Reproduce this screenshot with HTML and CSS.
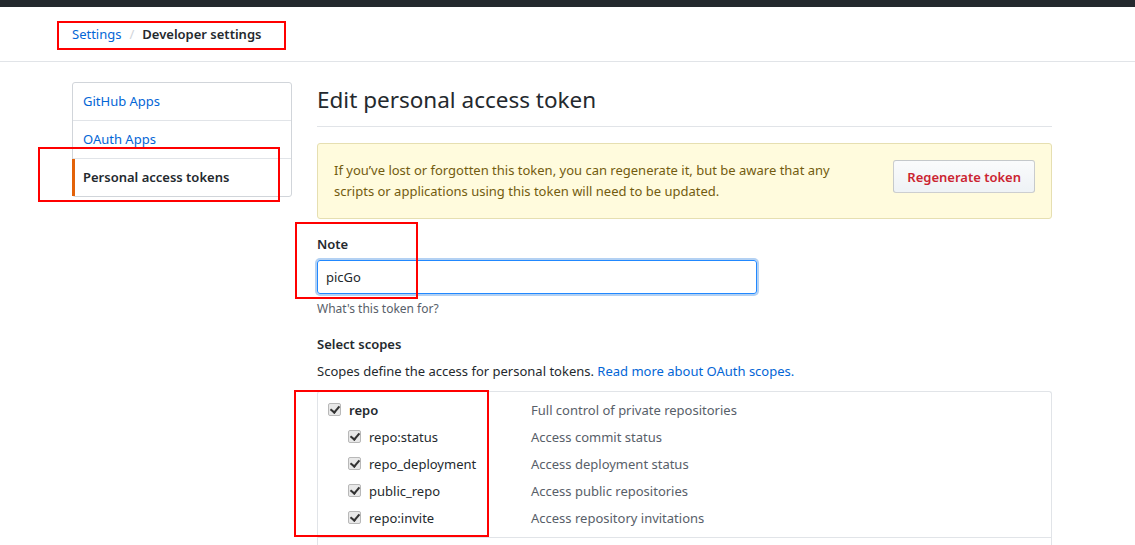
FILE: index.html
```html
<!DOCTYPE html>
<html>
<head>
<meta charset="utf-8">
<link rel="stylesheet" href="styles.css">
</head>
<body>
<div class="topbar"></div>
<header class="pagehead">
  <div class="container">
    <nav class="breadcrumb"><a href="#">Settings</a><span class="sep">/</span><strong>Developer settings</strong></nav>
  </div>
</header>
<div class="container layout">
  <aside class="menu">
    <a class="menu-item" href="#">GitHub Apps</a>
    <a class="menu-item" href="#">OAuth Apps</a>
    <a class="menu-item selected" href="#">Personal access tokens</a>
  </aside>
  <main class="main">
    <h2 class="subhead">Edit personal access token</h2>
    <div class="flash">
      <p>If you’ve lost or forgotten this token, you can regenerate it, but be aware that any<br>scripts or applications using this token will need to be updated.</p>
      <button class="btn">Regenerate token</button>
    </div>
    <div class="form-group">
      <label class="label">Note</label>
      <div class="input">picGo</div>
      <p class="note">What's this token for?</p>
    </div>
    <div class="form-group scopes-group">
      <div class="label">Select scopes</div>
      <p class="desc">Scopes define the access for personal tokens. <a href="#">Read more about OAuth scopes.</a></p>
      <div class="scopes">
        <ul class="scope-list">
          <li class="scope top"><span class="name"><span class="cb"></span><strong>repo</strong></span><span class="sdesc">Full control of private repositories</span></li>
          <li class="scope sub"><span class="name"><span class="cb"></span>repo:status</span><span class="sdesc">Access commit status</span></li>
          <li class="scope sub"><span class="name"><span class="cb"></span>repo_deployment</span><span class="sdesc">Access deployment status</span></li>
          <li class="scope sub"><span class="name"><span class="cb"></span>public_repo</span><span class="sdesc">Access public repositories</span></li>
          <li class="scope sub"><span class="name"><span class="cb"></span>repo:invite</span><span class="sdesc">Access repository invitations</span></li>
        </ul>
        <ul class="scope-list next"><li class="scope top"></li></ul>
      </div>
    </div>
  </main>
</div>
<div class="annot a1"></div>
<div class="annot a2"></div>
<div class="annot a3"></div>
<div class="annot a4"></div>
</body>
</html>
```
FILE: styles.css
```css
* { box-sizing: border-box; }
html, body { margin: 0; padding: 0; }
body {
  font-family: "Noto Sans", "Open Sans", sans-serif;
  font-size: 13px;
  line-height: 21px;
  color: #24292e;
  background: #fff;
  position: relative;
  overflow: hidden;
  height: 545px;
}
a { color: #0366d6; text-decoration: none; }
p { margin: 0; }
.topbar { height: 7px; background: #24292e; }
.container { width: 980px; margin-left: 72px; }
.pagehead { border-bottom: 1px solid #e1e4e8; height: 55px; }
.breadcrumb { padding-top: 17px; font-size: 13px; line-height: 21px; }
.breadcrumb .sep { color: #d1d5da; margin: 0 8px; }
.breadcrumb strong { font-weight: 600; }
.layout { display: flex; gap: 25px; margin-top: 20px; }
.menu {
  width: 220px; flex: none;
  border: 1px solid #d1d5da; border-radius: 3px;
  align-self: flex-start;
  display: flex; flex-direction: column;
}
.menu-item {
  display: block; padding: 8px 10px; line-height: 21px;
  border-bottom: 1px solid #e1e4e8;
  position: relative;
}
.menu-item:last-child { border-bottom: 0; }
.menu-item.selected { color: #24292e; font-weight: 600; cursor: default; }
.menu-item.selected::before {
  content: ""; position: absolute; left: -1px; top: 0; bottom: 0; width: 3px; background: #e36209;
}
.main { flex: 1; }
.subhead {
  margin: 0; font-size: 22.5px; font-weight: 400; line-height: 36px;
  padding-bottom: 8px; border-bottom: 1px solid #e1e4e8;
}
.flash {
  margin-top: 16px;
  background: #fffbdd; border: 1px solid #e6dfb1; border-radius: 3px;
  padding: 16px;
  color: #735c0f;
  display: flex; justify-content: space-between; align-items: flex-start;
}
.flash p { line-height: 21px; }
.btn {
  font: inherit; font-weight: 600; font-size: 13px; line-height: 20px;
  color: #cb2431;
  background: linear-gradient(#fafbfc, #eff3f6 90%);
  border: 1px solid rgba(27,31,35,.2); border-radius: 3px;
  padding: 6px 13px;
  height: 33px;
}
.form-group { margin-top: 15px; }
.label { display: block; font-weight: 600; line-height: 21px; }
.input {
  margin-top: 5px;
  width: 440px; height: 34px;
  border: 1px solid #2188ff; border-radius: 3px;
  box-shadow: 0 0 0 2px rgba(3,102,214,.3);
  padding: 6px 8px; line-height: 20px;
}
.note { font-size: 12px; color: #586069; margin-top: 5px; line-height: 20px; }
.scopes-group { margin-top: 15px; }
.desc { margin-top: 6px; line-height: 21px; }
.scopes {
  margin-top: 9px;
  border: 1px solid #e1e4e8; border-bottom: 0; border-radius: 3px 3px 0 0;
  height: 200px;
}
.scope-list { list-style: none; margin: 0; padding: 5px 0 5px; }
.scope-list.next { border-top: 1px solid #e1e4e8; }
.scope { display: flex; line-height: 21px; padding: 3px 0; }
.scope .name { width: 213px; display: flex; align-items: center; flex: none; }
.scope.top .name { padding-left: 10px; }
.scope.sub .name { padding-left: 30px; }
.scope strong { font-weight: 600; }
.sdesc { color: #586069; }
.cb {
  width: 13px; height: 13px; flex: none;
  margin-right: 8px; margin-top: -2px;
  border: 1px solid #b8b8b8; border-radius: 2px;
  background: #e8e8e8;
  position: relative;
}
.cb::after {
  content: ""; position: absolute; left: 3px; top: 0px;
  width: 4px; height: 7px;
  border: solid #333; border-width: 0 2px 2px 0;
  transform: rotate(40deg);
}
.annot { position: absolute; border: 2px solid #ff0000; }
.a1 { left: 57px; top: 21px; width: 229px; height: 29px; }
.a2 { left: 38px; top: 147px; width: 242px; height: 55px; }
.a3 { left: 295px; top: 222px; width: 123px; height: 77px; }
.a4 { left: 294px; top: 390px; width: 195px; height: 147px; }
```
